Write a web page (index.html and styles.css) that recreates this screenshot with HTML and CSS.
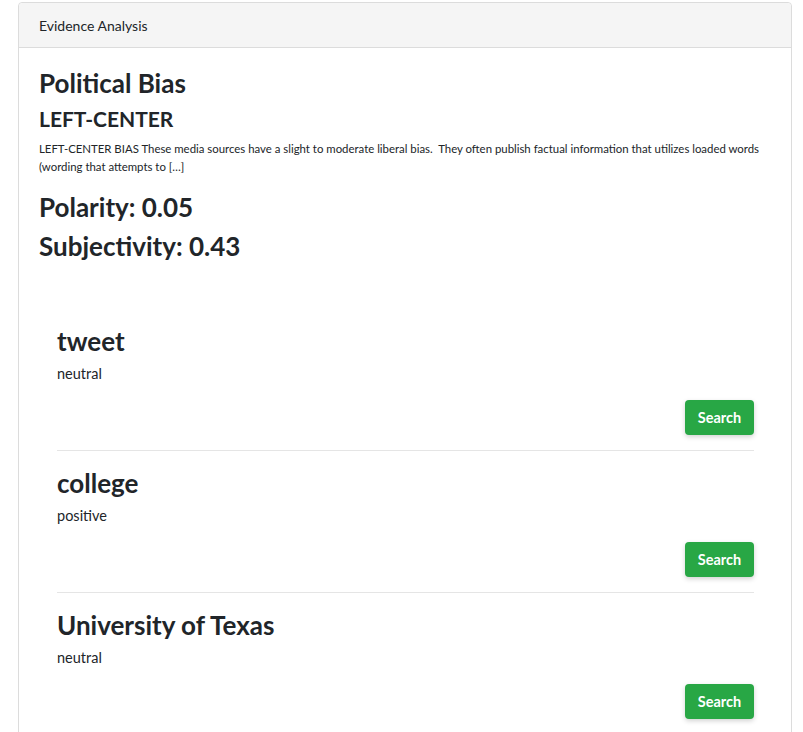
FILE: index.html
```html
<!DOCTYPE html>
<html>
<head>
<meta charset="utf-8">
<link rel="stylesheet" href="styles.css">
</head>
<body>
<div class="card">
  <div class="card-header">Evidence Analysis</div>
  <div class="card-body">
    <h2 class="title">Political Bias</h2>
    <h3 class="bias">LEFT-CENTER</h3>
    <p class="desc">LEFT-CENTER BIAS These media sources have a slight to moderate liberal bias.&nbsp; They often publish factual information that utilizes loaded words (wording that attempts to […]</p>
    <h2 class="metric">Polarity: 0.05</h2>
    <h2 class="metric">Subjectivity: 0.43</h2>
    <div class="entities">
      <div class="entity">
        <h2 class="entity-name">tweet</h2>
        <p class="entity-sent">neutral</p>
        <div class="entity-actions"><button class="btn-search">Search</button></div>
      </div>
      <div class="entity">
        <h2 class="entity-name">college</h2>
        <p class="entity-sent">positive</p>
        <div class="entity-actions"><button class="btn-search">Search</button></div>
      </div>
      <div class="entity">
        <h2 class="entity-name">University of Texas</h2>
        <p class="entity-sent">neutral</p>
        <div class="entity-actions"><button class="btn-search">Search</button></div>
      </div>
    </div>
  </div>
</div>
</body>
</html>
```

FILE: styles.css
```css
html, body {
  margin: 0;
  padding: 0;
  background: #ffffff;
}
body {
  font-family: Lato, "Source Sans Pro", "Liberation Sans", sans-serif;
  color: #212529;
  padding: 2px 11px 0 18px;
}
.card {
  border: 1px solid #dcdcdc;
  border-radius: 4px;
  background: #fff;
}
.card-header {
  background: #f5f5f5;
  border-bottom: 1px solid #dcdcdc;
  height: 45px;
  box-sizing: border-box;
  padding: 0 20px;
  display: flex;
  align-items: center;
  font-size: 14px;
  border-radius: 4px 4px 0 0;
}
.card-body {
  padding: 20px 20px 0 20px;
}
h2, h3, p {
  margin: 0;
}
.title {
  font-size: 26px;
  font-weight: 700;
  line-height: 30px;
}
.bias {
  font-size: 21px;
  font-weight: 700;
  line-height: 24px;
  margin-top: 9px;
}
.desc {
  font-size: 11.4px;
  line-height: 18px;
  margin-top: 9px;
}
.metric {
  font-size: 26px;
  font-weight: 700;
  line-height: 30px;
}
.desc + .metric {
  margin-top: 16px;
}
.metric + .metric {
  margin-top: 9px;
}
.entities {
  padding: 64px 17px 0 18px;
}
.entity {
  border-bottom: 1px solid #e5e5e5;
  padding-bottom: 15px;
  margin-bottom: 16px;
}
.entity-name {
  font-size: 26px;
  font-weight: 700;
  line-height: 32px;
}
.entity-sent {
  font-size: 14.5px;
  line-height: 20px;
  margin-top: 7px;
}
.entity-actions {
  display: flex;
  justify-content: flex-end;
  margin-top: 16px;
}
.btn-search {
  background: #28a745;
  color: #fff;
  border: none;
  border-radius: 4px;
  font-family: inherit;
  font-weight: 700;
  font-size: 14.5px;
  width: 69px;
  height: 35px;
  box-shadow: 0 2px 5px rgba(0, 0, 0, 0.18);
  cursor: pointer;
}
```
